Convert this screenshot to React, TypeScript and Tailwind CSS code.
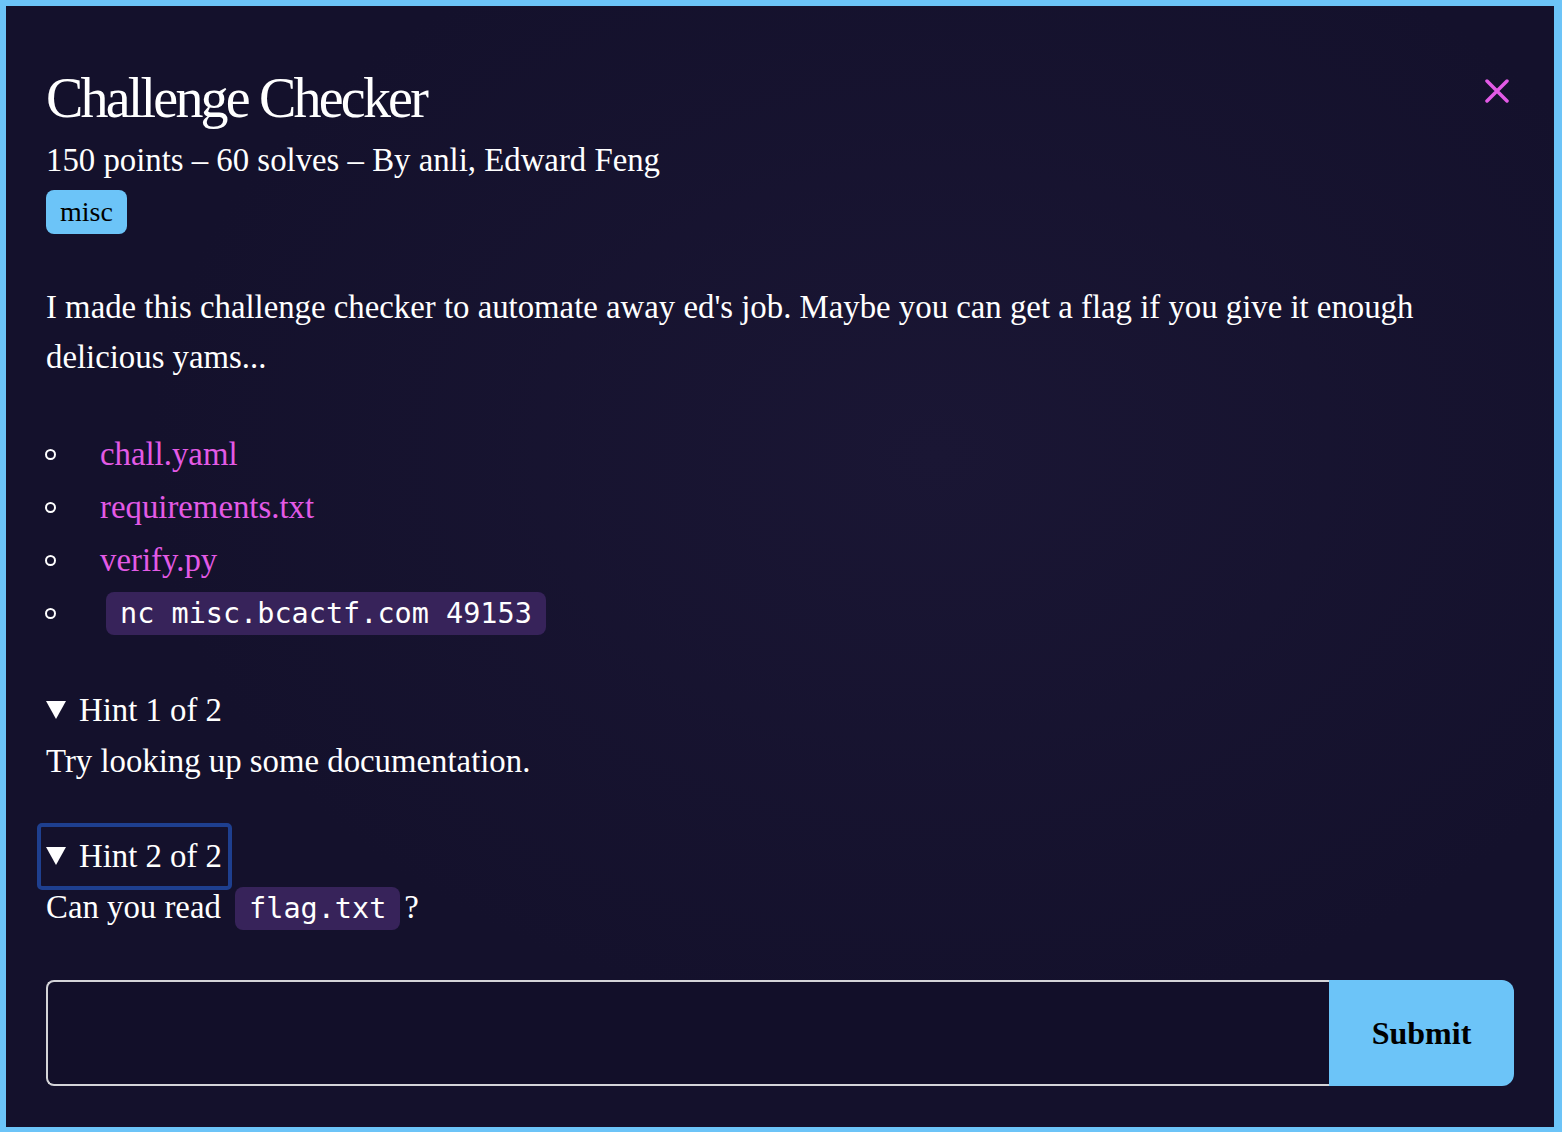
import React from 'react';

const links = ['chall.yaml', 'requirements.txt', 'verify.py'];

const Code: React.FC<{ children: React.ReactNode; className?: string }> = ({ children, className = '' }) => (
  <code
    className={`rounded-lg bg-[#37235a] px-[14px] py-[5px] font-['DejaVu_Sans_Mono',monospace] text-[28.5px] leading-[33px] text-white ${className}`}
  >
    {children}
  </code>
);

const Triangle = () => (
  <svg width="20" height="18" viewBox="0 0 20 18" className="mr-[13px] fill-white">
    <path d="M0 0H20L10 18Z" />
  </svg>
);

const Hint: React.FC<{ label: string; focused?: boolean; className?: string; children: React.ReactNode }> = ({
  label,
  focused,
  className = '',
  children,
}) => (
  <div className={className}>
    <div
      className={`-ml-[9px] inline-flex h-[67px] items-center rounded-[5px] border-4 pl-[5px] pr-[6px] leading-[39px] ${
        focused ? 'border-[#1e3f8f]' : 'border-transparent'
      }`}
    >
      <Triangle />
      <span>{label}</span>
    </div>
    <div className="-mt-[3px] leading-[40px]">{children}</div>
  </div>
);

export default function App() {
  return (
    <div className="h-[1132px] w-full overflow-hidden border-b-[5px] border-l-[6px] border-r-[8px] border-t-[6px] border-[#6cc4f8] bg-[#14112c] bg-[radial-gradient(ellipse_at_60%_40%,#1a1634_0%,#14112c_60%)] px-10 font-['Liberation_Serif',serif] text-[32.8px] text-white">
      <div className="flex items-start justify-between pt-[62px]">
        <h1 className="text-[56px] leading-[1.1] tracking-[-0.05em]">Challenge Checker</h1>
        <button className="mr-[5px] mt-[11px] text-[#e35ae6]" aria-label="Close">
          <svg width="24" height="24" viewBox="0 0 24 24" fill="none" stroke="currentColor" strokeWidth="3.5" strokeLinecap="round">
            <path d="M2 2L22 22M22 2L2 22" />
          </svg>
        </button>
      </div>
      <p className="mt-[10px] leading-[40px]">150 points – 60 solves – By anli, Edward Feng</p>
      <div className="mt-[10px] flex">
        <span className="rounded-lg bg-[#6cc4f8] px-[14px] py-[4px] text-[28px] leading-[36px] text-black">misc</span>
      </div>

      <p className="mt-[48px] leading-[50px]">
        I made this challenge checker to automate away ed's job. Maybe you can get a flag if you give it enough delicious yams...
      </p>

      <ul className="mt-[46px] leading-[53px]">
        {links.map((l) => (
          <li key={l} className="flex h-[53px] items-center">
            <span className="-ml-[1px] mr-[44px] h-[11px] w-[11px] rounded-full border-[2.5px] border-white" />
            <a href="#" className="text-[#e35ae6]">
              {l}
            </a>
          </li>
        ))}
        <li className="flex h-[53px] items-center">
          <span className="-ml-[1px] mr-[50px] h-[11px] w-[11px] rounded-full border-[2.5px] border-white" />
          <Code>nc misc.bcactf.com 49153</Code>
        </li>
      </ul>

      <Hint label="Hint 1 of 2" className="mt-[37px]">
        Try looking up some documentation.
      </Hint>
      <Hint label="Hint 2 of 2" focused className="mt-[42px]">
        Can you read <Code className="ml-[6px] mr-[4px]">flag.txt</Code>?
      </Hint>

      <form className="mt-[53px] flex h-[106px]" onSubmit={(e) => e.preventDefault()}>
        <input className="flex-1 rounded-l-lg border-2 border-r-0 border-[#d4d4d8] bg-[#120f29] px-4 text-[28px] text-white outline-none" />
        <button className="w-[185px] rounded-r-xl bg-[#6cc4f8] text-[32px] font-bold text-black">Submit</button>
      </form>
    </div>
  );
}
